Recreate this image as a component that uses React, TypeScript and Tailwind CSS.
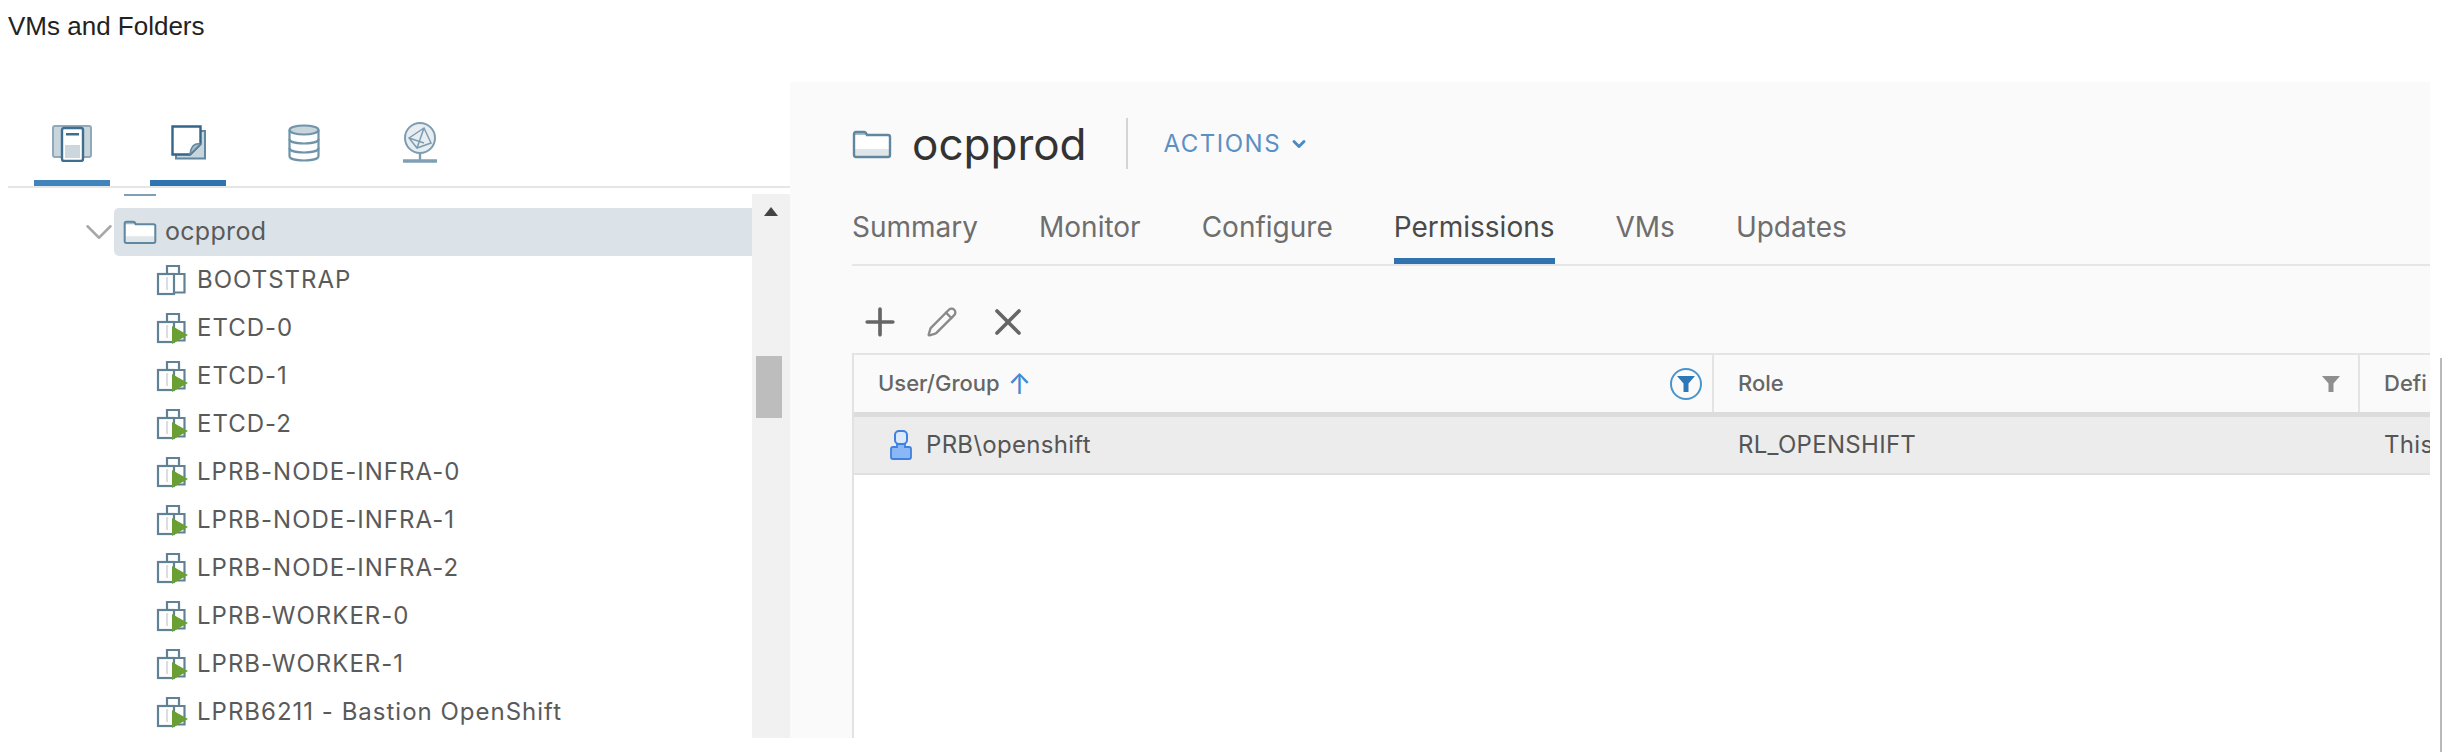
import { ChevronDown, Pencil, Plus, X } from "lucide-react";

const VMS = [
  { name: "BOOTSTRAP", on: false },
  { name: "ETCD-0", on: true },
  { name: "ETCD-1", on: true },
  { name: "ETCD-2", on: true },
  { name: "LPRB-NODE-INFRA-0", on: true },
  { name: "LPRB-NODE-INFRA-1", on: true },
  { name: "LPRB-NODE-INFRA-2", on: true },
  { name: "LPRB-WORKER-0", on: true },
  { name: "LPRB-WORKER-1", on: true },
  { name: "LPRB6211 - Bastion OpenShift", on: true },
];

const TABS = ["Summary", "Monitor", "Configure", "Permissions", "VMs", "Updates"];

function FolderIcon({ className }: { className: string }) {
  return (
    <svg viewBox="0 0 40 30" className={className} fill="none">
      <path d="M2 26V5q0-2 2-2h8q2 0 3 3h21q2 0 2 2v18q0 2-2 2H4q-2 0-2-2z" fill="#fff" />
      <path d="M3 20h34v6q0 1-1 1H4q-1 0-1-1z" fill="#dfe6ea" />
      <path d="M2 8V5q0-2 2-2h8q2 0 3 3h-11q-2 0-2 2z" fill="#a9bdc9" />
      <path d="M2 26V5q0-2 2-2h8q2 0 3 3h21q2 0 2 2v18q0 2-2 2H4q-2 0-2-2z" stroke="#5f879f" strokeWidth="2.4" />
    </svg>
  );
}

function VmIcon({ on }: { on: boolean }) {
  return (
    <svg viewBox="0 0 32 32" className="h-8 w-8 shrink-0" fill="none" stroke="#5f8296" strokeWidth="2.200">
      <path d="M11 10V2h12v8" />
      <path d="M18 10h10.500v18.500H18" />
      <rect x="2" y="10" width="16" height="20" />
      <path d="M11 13v13" stroke="#d5dfe5" strokeWidth="2" />
      {on && <path d="M16 14l16 9-16 9z" fill="#6aa033" stroke="none" />}
    </svg>
  );
}

function HostsIcon() {
  return (
    <svg viewBox="0 0 40 38" className="h-[38px] w-10" fill="none">
      <rect x="1" y="2" width="38" height="31" rx="2" fill="#c8d5dd" stroke="#8fa9ba" strokeWidth="2" />
      <rect x="10" y="4" width="21" height="33" rx="2" fill="#fff" stroke="#3f6e8e" strokeWidth="2.400" />
      <rect x="14" y="9" width="13" height="2.500" fill="#3f6e8e" />
      <rect x="13" y="21" width="15" height="13" fill="#cbd6dd" />
    </svg>
  );
}

function TemplateIcon() {
  return (
    <svg viewBox="0 0 35 35" className="h-[35px] w-[35px]" fill="none">
      <path d="M5 29v4.500h29V6h-4" fill="#c8d5dd" stroke="#5f879f" strokeWidth="2" />
      <path d="M1.500 1.500h28V19L19 29.500H1.500z" fill="#fff" stroke="#34658a" strokeWidth="2.400" />
      <path d="M29.500 19q-9-2-10.500 10.500z" fill="#a9bdc9" stroke="#5f879f" strokeWidth="1.500" />
    </svg>
  );
}

function StorageIcon() {
  return (
    <svg viewBox="0 0 32 38" className="h-[38px] w-8" fill="none" stroke="#6f93a8" strokeWidth="2.200">
      <path d="M1.500 6v26c0 6 29 6 29 0V6" fill="#fff" />
      <ellipse cx="16" cy="6" rx="14.500" ry="4.500" fill="#c8d5dd" />
      <path d="M1.500 15c0 6 29 6 29 0M1.500 24c0 6 29 6 29 0" />
    </svg>
  );
}

function NetworkIcon() {
  return (
    <svg viewBox="0 0 36 41" className="h-[41px] w-9" fill="none" stroke="#7d9db1" strokeWidth="2">
      <circle cx="18" cy="16" r="15" fill="#e7edf1" />
      <path d="M7 16l15-10 7 15-14 5zM7 16l15 5M22 6l-7 20" strokeWidth="1.500" />
      <path d="M18 31v7" strokeWidth="2.400" />
      <path d="M1 39h34" strokeWidth="3.400" stroke="#7f9fb3" />
    </svg>
  );
}

function FilterGlyph({ color }: { color: string }) {
  return (
    <svg viewBox="0 0 18 16" className="h-4 w-[18px]" fill={color}>
      <path d="M0 0h18l-6.500 7.500v8.500h-5V7.500z" />
    </svg>
  );
}

function UserIcon() {
  return (
    <svg viewBox="0 0 22 30" className="h-[30px] w-[22px]" fill="none">
      <rect x="5" y="1" width="12" height="13" rx="4" fill="#dbe9fc" stroke="#3f80e0" strokeWidth="2" />
      <path d="M7 14v3H3q-2 0-2 2v8q0 2 2 2h16q2 0 2-2v-8q0-2-2-2h-4v-3z" fill="#8ab8f7" stroke="#3f80e0" strokeWidth="1.800" />
    </svg>
  );
}

function NavPane() {
  return (
    <div className="flex h-[656px] w-[790px] shrink-0 flex-col bg-white">
      <div className="ml-2 flex h-[106px] gap-[40px] border-b-2 border-[#e6e6e6] pl-[26px]">
        <div className="flex w-[76px] flex-col items-center border-b-[6px] border-[#3f84bd] pt-[42px]">
          <HostsIcon />
        </div>
        <div className="flex w-[76px] flex-col items-center border-b-[6px] border-[#2f74b0] pt-[43px]">
          <TemplateIcon />
        </div>
        <div className="flex w-[76px] flex-col items-center pt-[42px]">
          <StorageIcon />
        </div>
        <div className="flex w-[76px] flex-col items-center pt-[40px]">
          <NetworkIcon />
        </div>
      </div>
      <div className="flex min-h-0 flex-1 overflow-hidden pt-[6px]">
        <div className="w-[752px] shrink-0">
          <div className="ml-[124px] h-[2px] w-8 bg-[#7f9fb3]" />
          <div className="relative ml-[114px] mt-3 flex h-12 items-center rounded-l-[5px] bg-[#dbe3e9]">
            <ChevronDown className="absolute -left-[38px] h-[46px] w-[46px] text-[#a8a8a8]" strokeWidth={1.300} />
            <FolderIcon className="ml-[9px] h-[26px] w-[34px] shrink-0" />
            <span className="ml-2 text-[25px] tracking-[0.3px] text-[#5a5a5a]">ocpprod</span>
          </div>
          {VMS.map((vm) => (
            <div key={vm.name} className="flex h-12 items-center pl-[156px]">
              <VmIcon on={vm.on} />
              <span className="ml-[9px] whitespace-nowrap text-[24px] tracking-[1px] text-[#5a5a5a]">{vm.name}</span>
            </div>
          ))}
        </div>
        <div className="relative w-[38px] shrink-0 bg-[#f1f1f1]">
          <div className="mx-auto mt-[13px] h-0 w-0 border-x-[7px] border-b-[9px] border-x-transparent border-b-[#444]" />
          <div className="ml-1 mt-[140px] h-[62px] w-[26px] bg-[#bdbdbd]" />
        </div>
      </div>
    </div>
  );
}

function DetailPane() {
  return (
    <div className="flex h-[656px] w-[1640px] shrink-0 flex-col overflow-hidden bg-[#fafafa] pl-[62px]">
      <div className="mt-9 flex h-[51px] items-center">
        <FolderIcon className="h-[30px] w-10 shrink-0" />
        <span className="ml-5 text-[44px] text-[#333]">ocpprod</span>
        <div className="ml-[39px] h-full w-[2px] bg-[#d4d4d4]" />
        <span className="ml-9 text-[24px] tracking-[1.500px] text-[#5a90c4]">ACTIONS</span>
        <ChevronDown className="ml-2 h-5 w-5 text-[#4a8ac4]" strokeWidth={3.500} />
      </div>
      <div className="flex h-[97px] items-end gap-[61px] border-b-2 border-[#e6e6e6]">
        {TABS.map((tab) => (
          <div
            key={tab}
            className={
              tab === "Permissions"
                ? "flex h-[58px] items-start border-b-[6px] border-[#2f74b0] pt-[3px] text-[28px] leading-[36px] text-[#4a4a4a]"
                : "flex h-[58px] items-start pt-[3px] text-[28px] leading-[36px] text-[#6e6e6e]"
            }
          >
            {tab}
          </div>
        ))}
      </div>
      <div className="flex h-[87px] items-center pl-[2px] pt-[24px] text-[#666]">
        <Plus className="ml-1 h-[44px] w-[44px] shrink-0" strokeWidth={2} />
        <Pencil className="ml-6 h-8 w-8 text-[#8a8a8a]" strokeWidth={1.800} />
        <X className="ml-[28px] h-[44px] w-[44px]" strokeWidth={2} />
      </div>
      <div className="flex min-h-0 flex-1 flex-col border-l-2 border-[#e2e2e2] bg-white">
        <div className="grid h-[64px] shrink-0 grid-cols-[860px_646px_1fr] border-t-2 border-b-[5px] border-t-[#e4e4e4] border-b-[#dcdcdc] bg-[#fafafa] text-[22px] text-[#666]">
          <div className="flex items-center border-r-2 border-[#e4e4e4] pl-[24px] pr-[10px]">
            <span className="font-medium">User/Group</span>
            <span className="ml-2 text-[28px] leading-none text-[#3f8ad0]">↑</span>
            <div className="ml-auto flex h-8 w-8 items-center justify-center rounded-full border-2 border-[#4a94cc]">
              <FilterGlyph color="#2f78b8" />
            </div>
          </div>
          <div className="flex items-center justify-between border-r-2 border-[#e4e4e4] pl-6 pr-[18px]">
            <span className="font-medium">Role</span>
            <FilterGlyph color="#8f8f8f" />
          </div>
          <div className="flex items-center pl-6 font-medium">Defi</div>
        </div>
        <div className="grid h-[58px] shrink-0 grid-cols-[860px_646px_1fr] border-b-2 border-[#e0e0e0] bg-[#ececec] text-[24px] tracking-[0.3px] text-[#555]">
          <div className="flex items-center gap-[14px] pl-9">
            <UserIcon />
            <span>PRB\openshift</span>
          </div>
          <div className="flex items-center pl-6">RL_OPENSHIFT</div>
          <div className="flex items-center pl-6">This</div>
        </div>
      </div>
    </div>
  );
}

export default function App() {
  return (
    <div className="h-[752px] w-[2442px] overflow-hidden bg-white font-[Inter,sans-serif]">
      <div className="h-[82px] pl-2 pt-[11px] font-['Liberation_Sans',sans-serif] text-[26px] leading-[30px] text-[#222]">
        VMs and Folders
      </div>
      <div className="flex h-[670px]">
        <NavPane />
        <DetailPane />
        <div className="flex flex-1 justify-end pt-[276px]">
          <div className="h-full w-[2px] bg-[#b9b9b9]" />
        </div>
      </div>
    </div>
  );
}
